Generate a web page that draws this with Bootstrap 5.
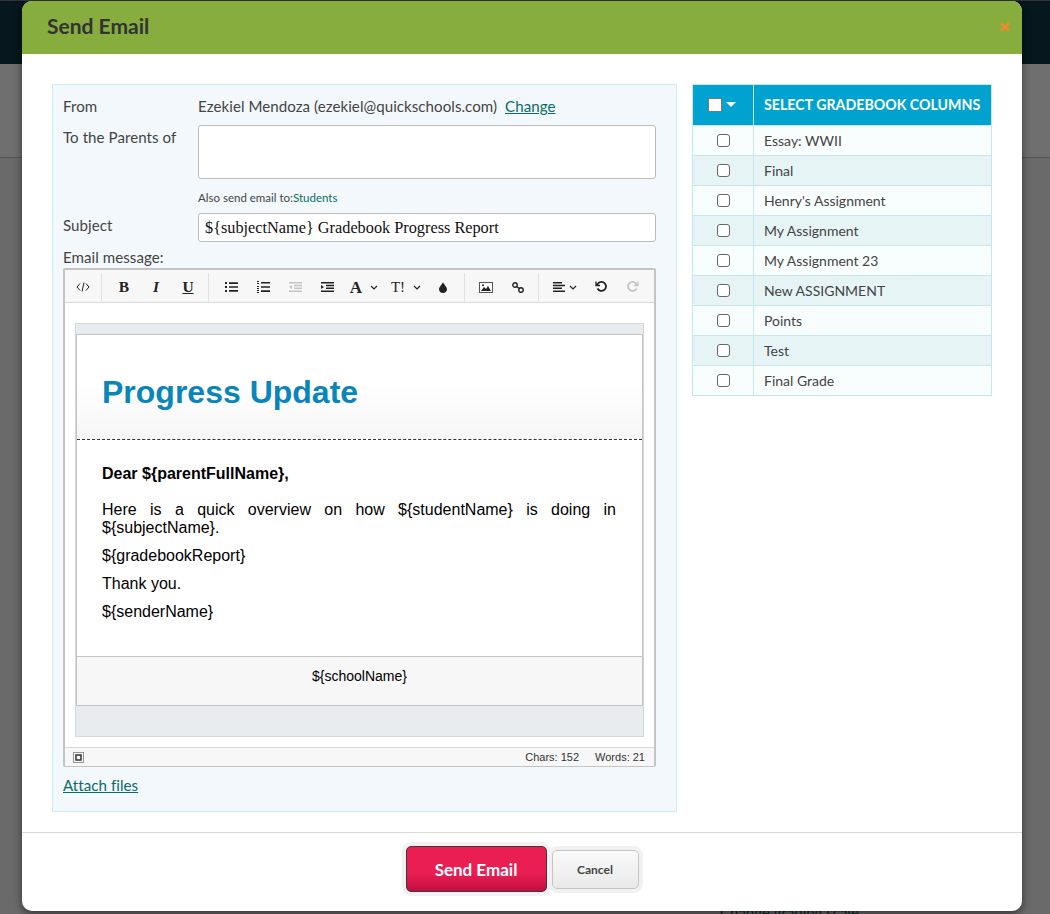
<!DOCTYPE html>
<html lang="en">
<head>
<meta charset="utf-8" />
<meta name="viewport" content="width=device-width,initial-scale=1" />
<title>Send Email</title>
<link href="https://cdn.jsdelivr.net/npm/bootstrap@5.3.3/dist/css/bootstrap.min.css" rel="stylesheet" />
<style>
  :root { --qs-teal:#0b6b66; --qs-line:#d3edf5; }
  html, body { height:914px; overflow:hidden; }
  body { background:#6a6a6a; font-family:Lato,"Liberation Sans",sans-serif; font-size:15.1px; color:#444; }
  .page-top { height:64px; background:#06171d; border-top:1px solid #333; }
  .page-band { height:94px; background:#6f6f6f; border-bottom:1px solid #555; }
  .page-link { position:absolute; left:720px; top:901px; font-size:15px; color:#0a2a2a; }

  .sheet { position:absolute; left:22px; top:1px; width:1000px; height:910px; background:#fff; border-radius:10px;
           box-shadow:0 3px 9px rgba(0,0,0,.5); display:flex; flex-direction:column; overflow:hidden; }
  .sheet-head { height:53px; flex:none; background:#86ad3e; padding:0 12px 3px 25px; }
  .sheet-head h5 { font-size:21px; font-weight:700; color:#333; margin:0; }
  .sheet-x { margin-top:1px; }
  .sheet-body { flex:1; padding:30px 30px 20px; gap:15px; }
  .sheet-foot { height:79px; flex:none; border-top:1px solid #d9d9d9; padding-top:13px; gap:5px; }

  .form-panel { width:625px; height:728px; flex:none; background:#f3f8fc; border:1px solid var(--qs-line); padding:10px; letter-spacing:.05px; }
  .f-label { width:135px; flex:none; }
  .f-row1 { height:30px; }
  .f-top1 { padding-top:1px; }
  .f-link { color:var(--qs-teal); text-decoration:underline; margin-left:4px; }
  .f-area { width:458px; height:54px; background:#fff; border:1px solid #bbb; border-radius:3px; }
  .f-also { font-size:11.5px; margin:11px 0 7px 135px; height:16px; line-height:16px; letter-spacing:0; }
  .f-also a { color:var(--qs-teal); text-decoration:none; }
  .f-subject { width:458px; height:29px; background:#fff; border:1px solid #bbb; border-radius:3px; padding:0 6px;
               font:16.3px/27px "Liberation Serif",serif; color:#111; letter-spacing:0; }
  .f-msg { height:26px; line-height:30px; }

  .editor { width:593px; height:499px; border:2px solid #c4c4c4; border-radius:2px; background:#fff; letter-spacing:0; }
  .ed-tools { height:33px; background:#f7f7f7; border-bottom:1px solid #d8d8d8; padding:3px 0; }
  .ed-group { height:28px; border-right:1px solid #e1e1e1; }
  .ed-group:last-child { border-right:0; }
  .ed-g1 { padding:0; }
  .ed-g2 { padding:0 4px 0 6px; }
  .ed-g3 { padding:0 5px 0 6px; }
  .ed-g4 { padding:0 4px 0 5px; }
  .ed-btn { width:32px; height:28px; display:flex; align-items:center; justify-content:center; color:#222; }
  .ed-source { width:36px; }
  .ed-drop { width:42px; }
  .ed-align { width:52px; }
  .ed-undo { width:20px; }
  .ed-redo { width:44px; }
  .ed-off { color:#bbb; }
  .ed-glyph { font:700 15.5px/1 "Liberation Serif",serif; }
  .ed-letter { font-size:17px; }
  .ed-size { font:15px/1 "Liberation Serif",serif; }
  .ed-content { height:444px; padding:20px 10px 10px; }
  .mail-frame { height:414px; background:#e9ecef; border:1px solid #d4d7d9; padding-top:10px; font-family:"Liberation Sans",sans-serif; color:#000; }
  .mail-box { height:372px; border:1px solid #c4c4c4; background:#fff; display:flex; flex-direction:column; }
  .mail-head { height:105px; flex:none; padding:0 25px; border-bottom:1px dashed #333;
               background:linear-gradient(#fff 45%,#f6f6f6); display:flex; align-items:center; }
  .mail-head h1 { font:700 32px/1 "Liberation Sans",sans-serif; color:#0a85b9; margin:10px 0 0; }
  .mail-text { flex:1; padding:25px 26px 0 25px; font-size:16px; line-height:18px; }
  .mail-text p { margin:0 0 10px; }
  .mail-text .mail-dear { margin-bottom:18px; font-weight:700; }
  .mail-text .just { text-align:justify; }
  .mail-foot { height:49px; flex:none; background:#f7f7f7; border-top:1px solid #c4c4c4; text-align:center; font-size:14px; padding-top:9px; }
  .ed-status { height:19px; background:#f7f7f7; border-top:1px solid #d8d8d8; padding:0 9px 0 8px; font:11px/19px "Liberation Sans",sans-serif; color:#333; }
  .ed-status span + span { margin-left:16px; }
  .f-attach { display:inline-block; margin-top:7px; color:var(--qs-teal); text-decoration:underline; }

  .pick-wrap { width:300px; flex:none; }
  .pick-table { margin:0; border-color:#c9e6ee; font-size:14px; table-layout:fixed; }
  .pick-table > :not(caption) > * > * { padding:0; vertical-align:middle; border:1px solid #c9e6ee; background:transparent; box-shadow:none; color:#444; }
  .pick-table th:first-child, .pick-table td:first-child { width:61px; text-align:center; }
  .pick-table td:last-child { padding-left:10px; }
  .pick-table > thead > tr > th { height:41px; background:#00a3cf; color:#fff; font-weight:700; font-size:14.2px; padding-left:10px; white-space:nowrap; }
  .pick-table > thead > tr > th:first-child { padding-left:0; padding-right:2px; }
  .pick-table tbody tr { height:30px; background:#f8fdfe; }
  .pick-table tbody tr:nth-child(even) { background:#e6f4f6; }
  .pick-all { display:inline-block; width:14px; height:14px; background:#fff; border:1px solid #777; vertical-align:-2px; }
  .pick-caret { display:inline-block; border:5px solid transparent; border-top-color:#fff; border-bottom:0; margin-left:4px; vertical-align:3px; }
  .pick-table .form-check-input { width:13px; height:13px; margin:4px 0 0; border:1px solid #666; border-radius:3px; float:none; }

  .btn-send { width:141px; height:46px; padding:2px 0 0; background:linear-gradient(#ea1e53 60%,#c20e3f); border:1px solid #3a3a3a; border-radius:5px;
              color:#fff; font-weight:700; font-size:17px; box-shadow:0 0 0 4px #f1f1f1; }
  .btn-cancel { width:87px; height:39px; padding:0; background:linear-gradient(#fafafa,#e9e9e9); border:1px solid #c4c4c4; border-radius:5px;
                color:#444; font-weight:700; font-size:12px; box-shadow:0 0 0 4px #f1f1f1; }
</style>
</head>

<body>
<div class="page-top"></div>
<div class="page-band"></div>
<div class="page-link">Change grading scale</div>

<div class="sheet">
  <div class="sheet-head d-flex align-items-center justify-content-between">
    <h5>Send Email</h5>
    <svg class="sheet-x" width="10" height="10" viewBox="0 0 10 10"><path d="M1 1l8 8M9 1l-8 8" stroke="#ec8a2c" stroke-width="2.6"/></svg>
  </div>

  <div class="sheet-body d-flex align-items-start">
    <div class="form-panel">
      <div class="d-flex f-row1">
        <div class="f-label">From</div>
        <div>Ezekiel Mendoza (ezekiel@quickschools.com) <a class="f-link" href="#">Change</a></div>
      </div>
      <div class="d-flex">
        <div class="f-label f-top1">To the Parents of</div>
        <div class="f-area"></div>
      </div>
      <div class="f-also">Also send email to:<a href="#">Students</a></div>
      <div class="d-flex">
        <div class="f-label f-top1">Subject</div>
        <div class="f-subject">${subjectName} Gradebook Progress Report</div>
      </div>
      <div class="f-msg">Email message:</div>

      <div class="editor">
        <div class="ed-tools d-flex">
          <div class="ed-group ed-g1 d-flex">
            <div class="ed-btn ed-source"><svg width="14" height="10" viewBox="0 0 14 10" fill="none" stroke="#222"><path d="M4 1.5L1 5l3 3.5M10 1.5L13 5l-3 3.5M8 .5L6 9.5"/></svg></div>
          </div>
          <div class="ed-group ed-g2 d-flex">
            <div class="ed-btn"><span class="ed-glyph">B</span></div>
            <div class="ed-btn"><span class="ed-glyph fst-italic">I</span></div>
            <div class="ed-btn"><span class="ed-glyph text-decoration-underline">U</span></div>
          </div>
          <div class="ed-group ed-g3 d-flex">
            <div class="ed-btn"><svg width="13" height="10" viewBox="0 0 13 10" fill="#222"><path d="M0 0h2v2H0zM4 .3h9v1.6H4zM0 4h2v2H0zM4 4.2h9v1.6H4zM0 8h2v2H0zM4 8.1h9v1.6H4z"/></svg></div>
            <div class="ed-btn"><svg width="13" height="12" viewBox="0 0 13 12" fill="#222"><path d="M0 0h2v1H0zM0 2h2v1H0zM0 5h2v1H0zM0 7h2v1H0zM0 9h2v1H0zM0 11h2v1H0zM4 1h9v1.6H4zM4 5.2h9v1.6H4zM4 9.3h9v1.6H4z"/></svg></div>
            <div class="ed-btn ed-off"><svg width="13" height="10" viewBox="0 0 13 10" fill="#c4c4c4"><path d="M0 0h13v1.6H0zM5 2.8h8v1.4H5zM5 5.6h8v1.4H5zM0 8.4h13V10H0zM3 3v4L0 5z"/></svg></div>
            <div class="ed-btn"><svg width="13" height="10" viewBox="0 0 13 10" fill="#222"><path d="M0 0h13v1.6H0zM5 2.8h8v1.4H5zM5 5.6h8v1.4H5zM0 8.4h13V10H0zM0 3v4l3-2z"/></svg></div>
            <div class="ed-btn ed-drop"><span class="ed-glyph ed-letter">A</span><svg class="ms-2" width="8" height="5" viewBox="0 0 8 5" fill="none" stroke="#222" stroke-width="1.2"><path d="M1 1l3 3 3-3"/></svg></div>
            <div class="ed-btn ed-drop"><span class="ed-size">T!</span><svg class="ms-2" width="8" height="5" viewBox="0 0 8 5" fill="none" stroke="#222" stroke-width="1.2"><path d="M1 1l3 3 3-3"/></svg></div>
            <div class="ed-btn"><svg width="8" height="11" viewBox="0 0 8 11" fill="#222"><path d="M4 0C3.500 2 0 5 0 7.200 0 9.400 1.800 11 4 11s4-1.600 4-3.800C8 5 4.500 2 4 0z"/></svg></div>
          </div>
          <div class="ed-group ed-g4 d-flex">
            <div class="ed-btn"><svg width="14" height="11" viewBox="0 0 14 11"><rect x=".5" y=".5" width="13" height="10" fill="#fff" stroke="#555"/><path d="M2 9l3-4 2 2 2-3 3 5z" fill="#222"/><circle cx="4" cy="3.300" r="1" fill="#222"/></svg></div>
            <div class="ed-btn"><svg width="12" height="11" viewBox="0 0 12 11" fill="none" stroke="#222" stroke-width="1.400"><circle cx="3" cy="3" r="2.200"/><circle cx="9" cy="8" r="2.200"/><path d="M4.800 4.500l2.400 2"/></svg></div>
          </div>
          <div class="ed-group d-flex">
            <div class="ed-btn ed-align"><svg width="12" height="10" viewBox="0 0 12 10" fill="#222"><path d="M0 0h9v1.500H0zM0 2.800h12v1.400H0zM0 5.600h9V7H0zM0 8.400h12V10H0z"/></svg><svg class="ms-1" width="8" height="5" viewBox="0 0 8 5" fill="none" stroke="#222" stroke-width="1.2"><path d="M1 1l3 3 3-3"/></svg></div>
            <div class="ed-btn ed-undo"><svg width="12" height="12" viewBox="0 0 12 12" fill="none" stroke="#222" stroke-width="1.800"><path d="M2.500 7.500A4.500 4.500 0 1 0 3 2.600L1.500 4"/><path d="M1 .5v4h4" stroke-width="1.300"/></svg></div>
            <div class="ed-btn ed-redo ed-off"><svg width="12" height="12" viewBox="0 0 12 12" fill="none" stroke="#c4c4c4" stroke-width="1.800"><path d="M9.500 7.500A4.500 4.500 0 1 1 9 2.600L10.500 4"/><path d="M11 .5v4H7" stroke-width="1.300"/></svg></div>
          </div>
        </div>

        <div class="ed-content">
          <div class="mail-frame">
            <div class="mail-box">
              <div class="mail-head"><h1>Progress Update</h1></div>
              <div class="mail-text">
                <p class="mail-dear">Dear ${parentFullName},</p>
                <p class="just">Here is a quick overview on how ${studentName} is doing in ${subjectName}.</p>
                <p>${gradebookReport}</p>
                <p>Thank you.</p>
                <p>${senderName}</p>
              </div>
              <div class="mail-foot">${schoolName}</div>
            </div>
          </div>
        </div>

        <div class="ed-status d-flex align-items-center justify-content-between">
          <svg width="11" height="11" viewBox="0 0 11 11" fill="none" stroke="#333"><rect x=".5" y=".5" width="10" height="10" stroke-dasharray="1 1"/><rect x="3" y="3" width="5" height="5" stroke-width="1.500"/></svg>
          <div><span>Chars: 152</span><span>Words: 21</span></div>
        </div>
      </div>
      <a class="f-attach" href="#">Attach files</a>
    </div>

    <div class="pick-wrap">
      <table class="table pick-table">
        <thead>
          <tr><th><span class="pick-all"></span><span class="pick-caret"></span></th><th>SELECT GRADEBOOK COLUMNS</th></tr>
        </thead>
        <tbody id="pick-rows"></tbody>
      </table>
    </div>
  </div>

  <div class="sheet-foot d-flex justify-content-center align-items-start">
    <button class="btn btn-send" type="button">Send Email</button>
    <button class="btn btn-cancel mt-1" type="button">Cancel</button>
  </div>
</div>

<script src="https://cdn.jsdelivr.net/npm/bootstrap@5.3.3/dist/js/bootstrap.bundle.min.js"></script>
<script>
// gradebook columns
const COLUMNS = ['Essay: WWII','Final',"Henry's Assignment",'My Assignment','My Assignment 23','New ASSIGNMENT','Points','Test','Final Grade'];
const rows = document.getElementById('pick-rows');
COLUMNS.forEach(name=>{
  const tr = document.createElement('tr');
  tr.innerHTML = '<td><input class="form-check-input" type="checkbox"></td><td></td>';
  tr.lastChild.textContent = name;
  rows.appendChild(tr);
});
</script>
</body>
</html>
